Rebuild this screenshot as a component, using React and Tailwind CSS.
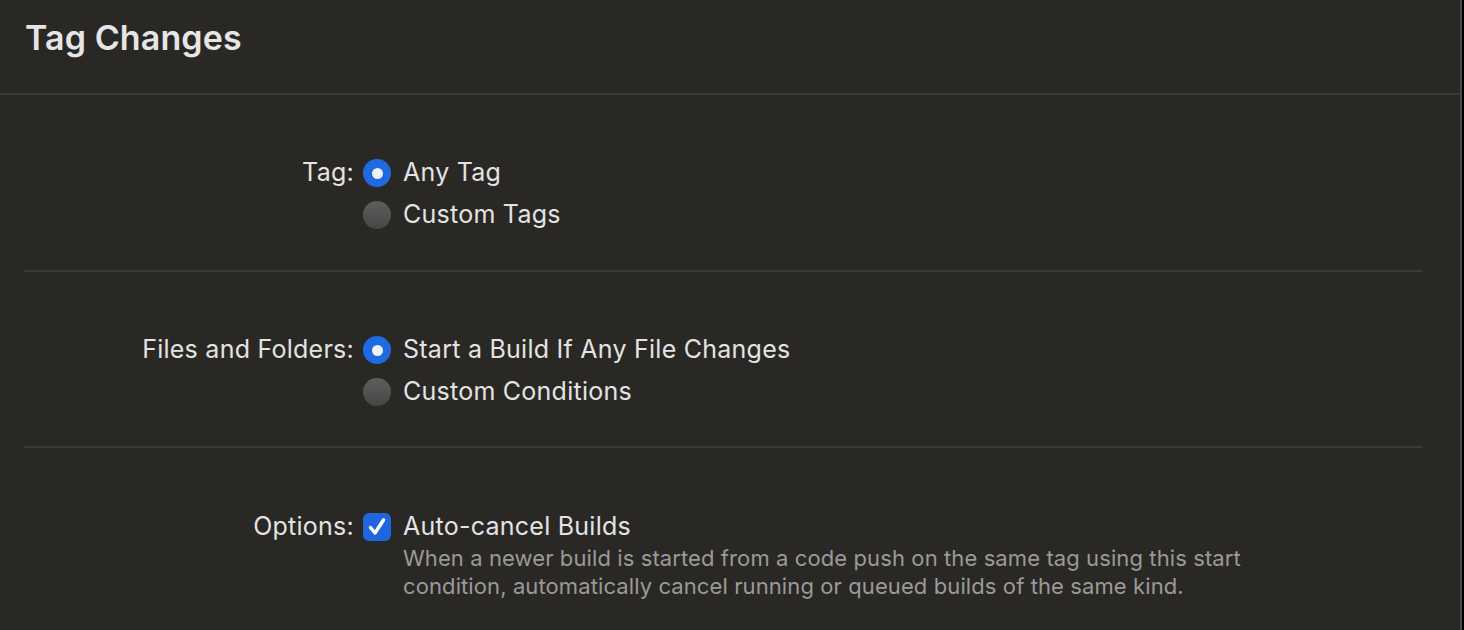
const FONT = { fontFamily: 'Inter, "Noto Sans", sans-serif' }

function Radio({ checked }) {
  if (checked) {
    return (
      <span className="w-[28px] h-[28px] rounded-full bg-[#1f6ae1] flex items-center justify-center shrink-0">
        <span className="w-[11px] h-[11px] rounded-full bg-[#eef1fa]" />
      </span>
    )
  }
  return (
    <span className="w-[28px] h-[28px] rounded-full bg-gradient-to-b from-[#5f5e5c] to-[#474644] shrink-0" />
  )
}

function Checkbox() {
  return (
    <span className="w-[28px] h-[28px] rounded-[6px] bg-[#1f66df] flex items-center justify-center shrink-0">
      <svg width="24" height="24" viewBox="0 0 24 24" fill="none">
        <path d="M5.5 12.5l4.5 5.5L18.5 5" stroke="#fff" strokeWidth="3.4" strokeLinecap="round" strokeLinejoin="round" />
      </svg>
    </span>
  )
}

function Row({ label, children }) {
  return (
    <div className="flex items-center h-[42px]">
      <div className="w-[339px] text-right pr-[9px] text-[25px] tracking-[0.25px] text-[#e3e3e3]">{label}</div>
      {children}
    </div>
  )
}

function Option({ control, text }) {
  return (
    <div className="flex items-center gap-[12px]">
      {control}
      <span className="text-[25px] tracking-[0.25px] text-[#e3e3e3]">{text}</span>
    </div>
  )
}

export default function App() {
  return (
    <div className="w-[1464px] h-[630px] bg-[#2a2825] flex overflow-hidden" style={FONT}>
      <div className="flex-1 flex flex-col">
        {/* header */}
        <div className="h-[93px] flex items-center pl-[25px] pb-[18px]">
          <h1 className="text-[34px] font-semibold text-[#e6e6e6] tracking-[0.1px]">Tag Changes</h1>
        </div>
        <div className="h-[2px] bg-[#3c3a38]" />

        <div className="pl-[24px] pr-[38px]">
          {/* tag */}
          <div className="pt-[57px] pb-[34px]">
            <Row label="Tag:">
              <Option control={<Radio checked />} text="Any Tag" />
            </Row>
            <Row label="">
              <Option control={<Radio />} text="Custom Tags" />
            </Row>
          </div>
          <div className="h-[2px] bg-[#3c3a38]" />

          {/* files */}
          <div className="pt-[57px] pb-[33px]">
            <Row label="Files and Folders:">
              <Option control={<Radio checked />} text="Start a Build If Any File Changes" />
            </Row>
            <Row label="">
              <Option control={<Radio />} text="Custom Conditions" />
            </Row>
          </div>
          <div className="h-[2px] bg-[#3c3a38]" />

          {/* options */}
          <div className="pt-[58px]">
            <Row label="Options:">
              <Option control={<Checkbox />} text="Auto-cancel Builds" />
            </Row>
            <p className="pl-[379px] -mt-[4px] text-[22px] leading-[28px] tracking-[0.1px] text-[#9b9a98]">
              When a newer build is started from a code push on the same tag using this start
              <br />
              condition, automatically cancel running or queued builds of the same kind.
            </p>
          </div>
        </div>
      </div>
      <div className="w-[2px] bg-[#4a4947]" />
      <div className="w-[2px] bg-black" />
    </div>
  )
}
